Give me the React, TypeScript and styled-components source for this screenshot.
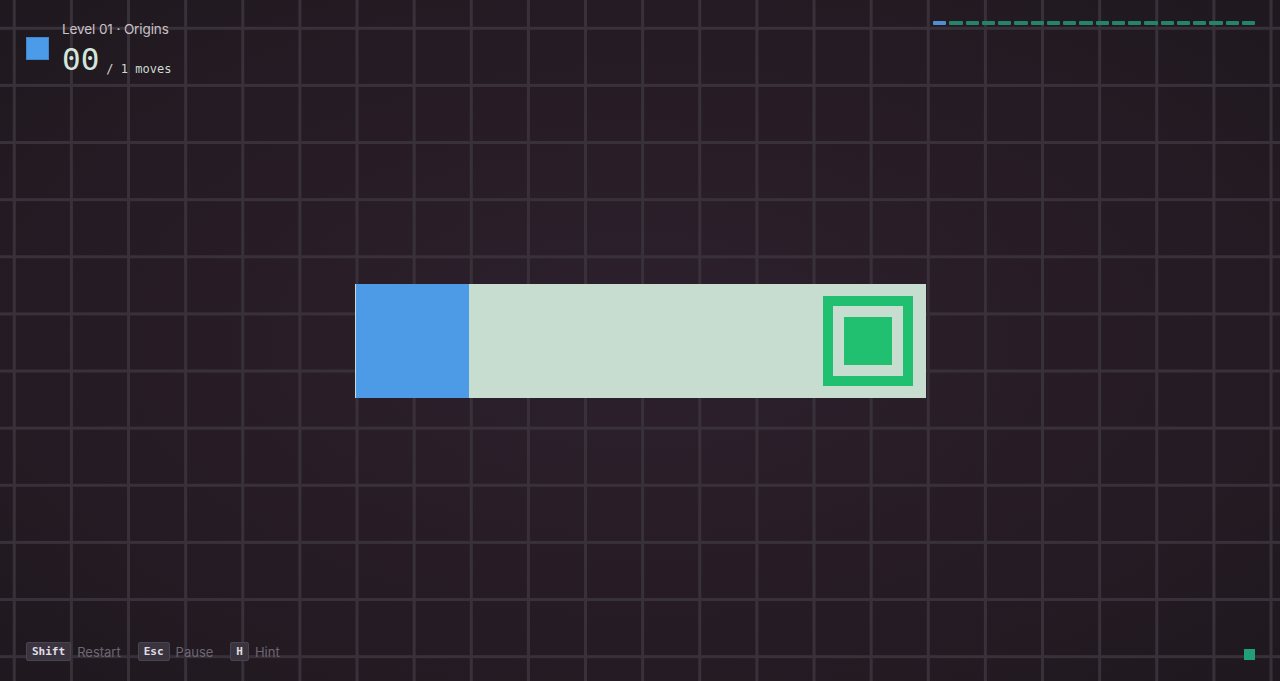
import React from "react";
import styled, { createGlobalStyle } from "styled-components";

const GlobalStyle = createGlobalStyle`
  html, body {
    margin: 0;
    padding: 0;
    background: #211920;
  }
  * {
    box-sizing: border-box;
  }
`;

const CELL = 57.14;
const LINE = "#39313a";

const Page = styled.div`
  position: relative;
  width: 100vw;
  height: 100vh;
  overflow: hidden;
  display: flex;
  align-items: center;
  justify-content: center;
  font-family: Inter, "Noto Sans", sans-serif;
  background-color: #231a22;
  background-image: linear-gradient(to right, ${LINE} 3px, transparent 3px),
    linear-gradient(to bottom, ${LINE} 3px, transparent 3px),
    radial-gradient(ellipse at 50% 50%, #2d202d 0%, #271c26 50%, #1f181e 100%);
  background-size: ${CELL}px ${CELL}px, ${CELL}px ${CELL}px, 100% 100%;
  background-position: 12.8px 26.8px, 12.8px 26.8px, 0 0;
`;

const Hud = styled.div`
  position: absolute;
  left: 26px;
  right: 25px;
  display: flex;
  justify-content: space-between;
`;

const TopHud = styled(Hud)`
  top: 21px;
  align-items: flex-start;
`;

const BottomHud = styled(Hud)`
  bottom: 20px;
  align-items: center;
`;

const LevelInfo = styled.div`
  display: flex;
  align-items: flex-start;
  gap: 13px;
`;

const PlayerSwatch = styled.div`
  width: 23px;
  height: 23px;
  margin-top: 16px;
  background: #4c9be8;
  border: 1px solid #3f86cf;
`;

const InfoText = styled.div`
  display: flex;
  flex-direction: column;
`;

const LevelName = styled.div`
  font-size: 13.5px;
  line-height: 17px;
  color: #c9c1c9;
  letter-spacing: -0.1px;
`;

const MovesRow = styled.div`
  display: flex;
  align-items: baseline;
  gap: 7px;
  margin-top: 5px;
`;

const MoveCount = styled.span`
  font-family: "DejaVu Sans Mono", "Liberation Mono", monospace;
  font-size: 31px;
  line-height: 32px;
  color: #d3e6dc;
`;

const MoveGoal = styled.span`
  font-family: "DejaVu Sans Mono", "Liberation Mono", monospace;
  font-size: 12px;
  color: #cdd9d2;
  transform: translateY(3px);
`;

const Progress = styled.div`
  display: flex;
  gap: 3px;
  width: 322px;
`;

const Segment = styled.div<{ $active?: boolean }>`
  flex: 1;
  height: 4px;
  border-radius: 1px;
  background: ${({ $active }) => ($active ? "#4f8fd6" : "#22846a")};
`;

const Board = styled.div`
  display: grid;
  grid-template-columns: repeat(10, 1fr);
  grid-template-rows: repeat(2, 1fr);
  width: 571px;
  height: 114px;
  background: #c6ddd0;
`;

const Block = styled.div`
  grid-column: 1 / span 2;
  grid-row: 1 / span 2;
  margin-left: 1px;
  background: #4d9be7;
`;

const Goal = styled.div`
  grid-column: 9 / span 2;
  grid-row: 1 / span 2;
  margin: 12px;
  border: 10px solid #21bf70;
  padding: 11px;
  display: flex;
`;

const GoalCore = styled.div`
  flex: 1;
  background: #21bf70;
`;

const Hints = styled.div`
  display: flex;
  align-items: center;
  gap: 17px;
`;

const Hint = styled.div`
  display: flex;
  align-items: center;
  gap: 6px;
`;

const Key = styled.kbd`
  display: inline-flex;
  align-items: center;
  justify-content: center;
  height: 19px;
  padding: 0 5px;
  background: #3a3440;
  border: 1px solid #4a4450;
  border-radius: 2px;
  font-family: "DejaVu Sans Mono", "Liberation Mono", monospace;
  font-weight: bold;
  font-size: 11px;
  color: #e2dee4;
`;

const HintLabel = styled.span`
  font-size: 13px;
  color: #6e6673;
`;

const StatusDot = styled.div`
  width: 11px;
  height: 11px;
  margin-top: 6px;
  background: #1fa078;
`;

const hints = [
  { key: "Shift", label: "Restart" },
  { key: "Esc", label: "Pause" },
  { key: "H", label: "Hint" },
];

export default function App() {
  return (
    <>
      <GlobalStyle />
      <Page>
        <TopHud>
          <LevelInfo>
            <PlayerSwatch />
            <InfoText>
              <LevelName>Level 01 · Origins</LevelName>
              <MovesRow>
                <MoveCount>00</MoveCount>
                <MoveGoal>/ 1 moves</MoveGoal>
              </MovesRow>
            </InfoText>
          </LevelInfo>
          <Progress>
            {Array.from({ length: 20 }, (_, i) => (
              <Segment key={i} $active={i === 0} />
            ))}
          </Progress>
        </TopHud>

        <Board>
          <Block />
          <Goal>
            <GoalCore />
          </Goal>
        </Board>

        <BottomHud>
          <Hints>
            {hints.map((h) => (
              <Hint key={h.key}>
                <Key>{h.key}</Key>
                <HintLabel>{h.label}</HintLabel>
              </Hint>
            ))}
          </Hints>
          <StatusDot />
        </BottomHud>
      </Page>
    </>
  );
}
